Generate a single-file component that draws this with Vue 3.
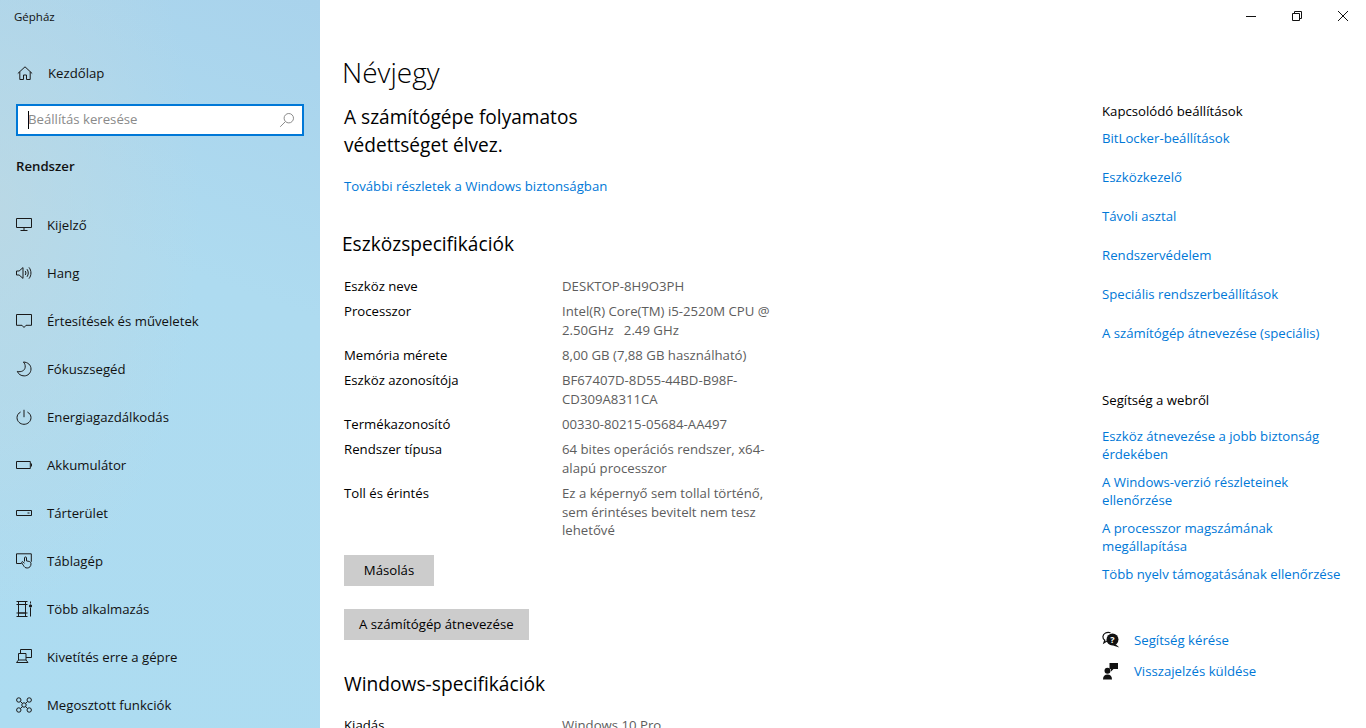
<script setup>
// Gépház - Névjegy oldal
const navItems = [
  { title: "Kijelző", icon: "display" },
  { title: "Hang", icon: "sound" },
  { title: "Értesítések és műveletek", icon: "notify" },
  { title: "Fókuszsegéd", icon: "moon" },
  { title: "Energiagazdálkodás", icon: "power" },
  { title: "Akkumulátor", icon: "battery" },
  { title: "Tárterület", icon: "storage" },
  { title: "Táblagép", icon: "tablet" },
  { title: "Több alkalmazás", icon: "multi" },
  { title: "Kivetítés erre a gépre", icon: "project" },
  { title: "Megosztott funkciók", icon: "shared" },
]

const specs = [
  { label: "Eszköz neve", lines: ["DESKTOP-8H9O3PH"] },
  { label: "Processzor", lines: ["Intel(R) Core(TM) i5-2520M CPU @", "2.50GHz\u00a0\u00a0\u00a02.49 GHz"] },
  { label: "Memória mérete", lines: ["8,00 GB (7,88 GB használható)"] },
  { label: "Eszköz azonosítója", lines: ["BF67407D-8D55-44BD-B98F-", "CD309A8311CA"] },
  { label: "Termékazonosító", lines: ["00330-80215-05684-AA497"] },
  { label: "Rendszer típusa", lines: ["64 bites operációs rendszer, x64-", "alapú processzor"] },
  { label: "Toll és érintés", lines: ["Ez a képernyő sem tollal történő,", "sem érintéses bevitelt nem tesz", "lehetővé"] },
]

const relatedLinks = [
  "BitLocker-beállítások",
  "Eszközkezelő",
  "Távoli asztal",
  "Rendszervédelem",
  "Speciális rendszerbeállítások",
  "A számítógép átnevezése (speciális)",
]

const webLinks = [
  ["Eszköz átnevezése a jobb biztonság", "érdekében"],
  ["A Windows-verzió részleteinek", "ellenőrzése"],
  ["A processzor magszámának", "megállapítása"],
  ["Több nyelv támogatásának ellenőrzése"],
]
</script>

<template>
  <div class="window">
    <aside class="sidebar">
      <div class="app-title">Gépház</div>

      <a class="home">
        <svg class="icon" viewBox="0 0 16 16">
          <path d="M.8 8.500 8 1.800l7.200 6.700M2.800 6.800v7.700h3.700V10h3v4.500h3.700V6.800" />
        </svg>
        <span>Kezdőlap</span>
      </a>

      <div class="search">
        <span class="caret"></span>
        <span class="placeholder">Beállítás keresése</span>
        <svg class="search-icon" viewBox="0 0 16 16">
          <circle cx="9.800" cy="6.200" r="4.700" />
          <path d="M6.400 9.600 1.200 14.800" />
        </svg>
      </div>

      <div class="group-title">Rendszer</div>

      <nav class="nav">
        <a v-for="it in navItems" :key="it.title" class="nav-item">
          <svg class="icon" viewBox="0 0 16 16">
            <template v-if="it.icon === 'display'">
              <path d="M.5 1.500h15v9H.5zM8 10.500v3M4.500 13.500h7" />
            </template>
            <template v-else-if="it.icon === 'sound'">
              <path d="M.5 6h2.600L7 2.600v10.800L3.100 10H.5zM9.200 6c.9 1.200.9 2.800 0 4M11 4.200c1.700 2.200 1.700 5.400 0 7.600M13 2.400c2.600 3.300 2.600 7.900 0 11.200" />
            </template>
            <template v-else-if="it.icon === 'notify'">
              <path d="M.5 1.500h15v10.800H10l-2 2.200-2-2.200H.5z" />
            </template>
            <template v-else-if="it.icon === 'moon'">
              <path d="M7.400 1c4.500.2 7.600 3 7.600 7 0 3.900-3 6.900-6.800 6.900-3.200 0-5.800-1.700-6.900-4.500 4 1 7.500-.8 7.900-4.200.2-2-.5-3.800-1.800-5.200z" />
            </template>
            <template v-else-if="it.icon === 'power'">
              <path d="M8 .8v7.400M4.600 3C2.400 4.200 1 6.300 1 8.600 1 12.300 4.100 15.300 8 15.300s7-3 7-6.700c0-2.300-1.400-4.400-3.600-5.600" />
            </template>
            <template v-else-if="it.icon === 'battery'">
              <path d="M.5 4.500h13.800v7H.5zM14.500 6.800h1v2.400h-1" />
            </template>
            <template v-else-if="it.icon === 'storage'">
              <path d="M.5 5.500h15v5H.5zM11.500 8h2" />
            </template>
            <template v-else-if="it.icon === 'tablet'">
              <path d="M5.500 10.500H.5V.8h14.800v8M8.500 8.500V4.900c0-1.300 2-1.300 2 0v3l2.400.5c1.300.3 2.100 1 2.100 2.400 0 2.500-1.500 4.200-3.800 4.200-2 0-2.800-1-3.500-2.200L5.800 10c-.6-1 .6-1.800 1.400-1l1.300 1.400" />
            </template>
            <template v-else-if="it.icon === 'multi'">
              <path d="M.5.500h11M.5 15.500h11M2.500 3.500h7v8.500h-7zM.5 3.500h11M.5 12h11M2.500.5v3M9.500.5v3M2.500 12v3.500M9.500 12v3.500M14.500.5v2M14.500 7v8.500" />
              <circle cx="14.500" cy="5" r="1.200" class="solid" />
            </template>
            <template v-else-if="it.icon === 'project'">
              <path d="M4.500 4V.5h11v8H10M2.500 4.500h7.500v6.500H2.500zM.5 13.500h11.500M2.500 11 .5 13.500M10 11l2 2.500" />
            </template>
            <template v-else>
              <circle cx="2.800" cy="3" r="2.200" />
              <circle cx="13.200" cy="3" r="2.200" />
              <circle cx="2.800" cy="13" r="2.200" />
              <circle cx="13.200" cy="13" r="2.200" />
              <circle cx="8" cy="8" r="2.200" />
              <path d="M4.500 4.500 6.500 6.500M11.500 4.500l-2 2M4.500 11.500l2-2M11.500 11.500l-2-2" />
            </template>
          </svg>
          <span>{{ it.title }}</span>
        </a>
      </nav>
    </aside>

    <main class="content">
      <div class="window-controls">
        <svg viewBox="0 0 12 12"><path d="M1 6.500h10" /></svg>
        <svg viewBox="0 0 12 12"><path d="M1.500 3.500h7v7h-7zM3.500 3.500v-2h7v7h-2" /></svg>
        <svg viewBox="0 0 12 12"><path d="m1 1 10 10M11 1 1 11" /></svg>
      </div>

      <div class="columns">
        <section class="main-col">
          <h1>Névjegy</h1>
          <p class="protect">A számítógépe folyamatos<br />védettséget élvez.</p>
          <a class="link more">További részletek a Windows biztonságban</a>

          <h2>Eszközspecifikációk</h2>
          <dl class="specs">
            <div v-for="row in specs" :key="row.label" class="spec-row">
              <dt>{{ row.label }}</dt>
              <dd>
                <div v-for="line in row.lines" :key="line">{{ line }}</div>
              </dd>
            </div>
          </dl>

          <button class="btn copy" type="button">Másolás</button>
          <button class="btn rename" type="button">A számítógép átnevezése</button>

          <h2 class="win-title">Windows-specifikációk</h2>
          <dl class="win-specs">
            <div class="spec-row">
              <dt>Kiadás</dt>
              <dd>Windows 10 Pro</dd>
            </div>
          </dl>
        </section>

        <section class="side-col">
          <h3>Kapcsolódó beállítások</h3>
          <div class="related">
            <a v-for="l in relatedLinks" :key="l" class="link">{{ l }}</a>
          </div>

          <h3 class="web-title">Segítség a webről</h3>
          <div class="web">
            <a v-for="l in webLinks" :key="l[0]" class="link">
              <div v-for="line in l" :key="line">{{ line }}</div>
            </a>
          </div>

          <div class="help">
            <a class="help-row">
              <svg viewBox="0 0 18 18">
                <path class="outline" d="M8.500 1.800C5 .6 1.200 2.300.9 5.600c-.1 1.500.6 2.800 1.900 3.700l-.9 2.500 3.100-1.900" />
                <circle cx="10.500" cy="8.500" r="6" class="fill" />
                <path class="fill" d="m13.500 13 3.800 3.500-6.300-2z" />
                <text x="10.500" y="12" text-anchor="middle" class="q">?</text>
              </svg>
              <span class="link">Segítség kérése</span>
            </a>
            <a class="help-row">
              <svg viewBox="0 0 18 18">
                <circle cx="5.500" cy="8.800" r="3" class="fill" />
                <path class="fill" d="M1 17.500c0-3.500 1.800-5 4.500-5s4.500 1.500 4.500 5z" />
                <path class="fill" d="M7.500 1h8.500v6h-4.500L9 9.500V7H7.500z" />
              </svg>
              <span class="link">Visszajelzés küldése</span>
            </a>
          </div>
        </section>
      </div>
    </main>
  </div>
</template>

<style>
html,
body {
  margin: 0;
  height: 100%;
  overflow: hidden;
}
</style>

<style scoped>
.window {
  width: 1366px;
  height: 728px;
  display: flex;
  overflow: hidden;
  background: #fff;
  color: #000;
  font-family: "Open Sans", "Noto Sans", Arial, sans-serif;
  font-size: 13.2px;
}

/* ===== Sidebar ===== */
.sidebar {
  width: 320px;
  flex-shrink: 0;
  box-sizing: border-box;
  background:
    radial-gradient(ellipse 200px 400px at 0 210px, rgba(190, 215, 225, 0.7), rgba(190, 215, 225, 0)),
    linear-gradient(200deg, #a9d3ec 0, #aedbf0 38%, #addcf1 100%);
  color: #111;
}

.app-title {
  height: 34px;
  padding: 7px 0 0 14px;
  box-sizing: border-box;
  font-size: 11.5px;
  line-height: 20px;
}

.icon {
  width: 16px;
  height: 16px;
  flex-shrink: 0;
  fill: none;
  stroke: #1a1a1a;
  stroke-width: 1;
}

.icon .solid {
  fill: #1a1a1a;
}

.home {
  height: 48px;
  margin-top: 15px;
  padding-left: 17px;
  display: flex;
  align-items: center;
  gap: 15px;
}

.search {
  width: 288px;
  height: 32px;
  margin: 7px 0 0 16px;
  box-sizing: border-box;
  border: 2px solid #0078d7;
  background: #fff;
  display: flex;
  align-items: center;
  padding: 0 7px 0 10px;
}

.caret {
  width: 1px;
  height: 18px;
  background: #000;
}

.placeholder {
  flex: 1;
  margin-left: -1px;
  margin-top: -3px;
  color: #8a8a8a;
}

.search-icon {
  width: 16px;
  height: 16px;
  fill: none;
  stroke: #8c8c8c;
  stroke-width: 1;
}

.group-title {
  margin: 19px 0 0 16px;
  line-height: 22px;
  font-weight: 600;
}

.nav {
  margin-top: 24px;
  display: flex;
  flex-direction: column;
}

.nav-item {
  height: 48px;
  padding-left: 16px;
  display: flex;
  align-items: center;
  gap: 15px;
}

/* ===== Content ===== */
.content {
  flex: 1;
  position: relative;
  min-width: 0;
}

.window-controls {
  position: absolute;
  top: 10px;
  right: 17px;
  display: flex;
  gap: 34px;
}

.window-controls svg {
  width: 12px;
  height: 12px;
  fill: none;
  stroke: #111;
  stroke-width: 1;
}

.columns {
  display: flex;
  padding-left: 22px;
}

.main-col {
  width: 760px;
  flex-shrink: 0;
}

h1 {
  margin: 52px 0 0;
  font-size: 28px;
  line-height: 40px;
  font-weight: 300;
  color: #000;
}

.protect {
  margin: 11px 0 0 2px;
  font-size: 19.100px;
  line-height: 28px;
}

.link {
  display: block;
  color: #0078d7;
}

.more {
  margin: 16px 0 0 2px;
  line-height: 22px;
}

h2 {
  margin: 33px 0 0;
  font-size: 19.100px;
  line-height: 28px;
  font-weight: 400;
}

.specs {
  margin: 19px 0 0;
}

.spec-row {
  display: flex;
  margin-left: 2px;
  margin-bottom: 6.600px;
  line-height: 18.600px;
}

dt {
  width: 218px;
  flex-shrink: 0;
}

dd {
  margin: 0;
  color: #5d5d5d;
}

.btn {
  display: block;
  height: 31px;
  min-width: 90px;
  margin-left: 2px;
  border: none;
  background: #ccc;
  color: #000;
  font: inherit;
  padding: 0 15px;
}

.copy {
  margin-top: 15px;
}

.rename {
  margin-top: 23px;
}

.win-title {
  margin: 30px 0 0 2px;
  font-size: 19.200px;
}

.win-specs {
  margin: 18px 0 0;
}

.side-col {
  padding: 100px 0 0 0;
  width: 262px;
}

h3 {
  margin: 0;
  font-size: 13.2px;
  line-height: 22px;
  font-weight: 400;
}

.related {
  display: flex;
  flex-direction: column;
  gap: 17px;
  margin-top: 5px;
}

.related .link {
  line-height: 22px;
}

.web-title {
  margin-top: 45px;
}

.web {
  display: flex;
  flex-direction: column;
  gap: 10px;
  margin-top: 16px;
}

.web .link {
  line-height: 18px;
}

.help {
  margin-top: 46px;
  display: flex;
  flex-direction: column;
  gap: 9px;
}

.help-row {
  display: flex;
  align-items: center;
  gap: 14px;
  height: 22px;
}

.help-row svg {
  width: 18px;
  height: 18px;
}

.fill {
  fill: #111;
}

.outline {
  fill: none;
  stroke: #111;
  stroke-width: 1.200;
}

.q {
  fill: #fff;
  font-size: 9px;
  font-weight: 700;
}
</style>
